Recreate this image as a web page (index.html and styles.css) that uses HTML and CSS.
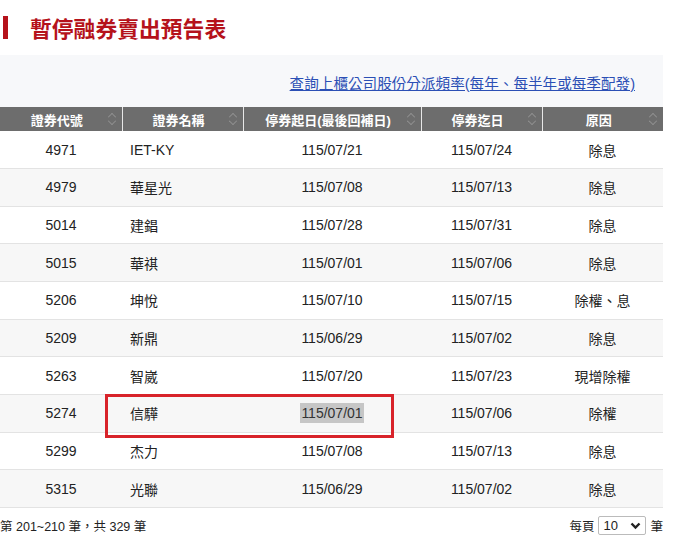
FILE: index.html
```html
<!DOCTYPE html>
<html lang="zh-Hant">
<head>
<meta charset="utf-8">
<link rel="stylesheet" href="styles.css">
</head>
<body>
<div class="page">
  <h1 class="title"><span class="bar"></span>暫停融券賣出預告表</h1>
  <div class="panel">
    <div class="linkrow"><a href="#" class="link">查詢上櫃公司股份分派頻率(每年、每半年或每季配發)</a></div>
    <table class="grid">
      <colgroup>
        <col class="c1"><col class="c2"><col class="c3"><col class="c4"><col class="c5">
      </colgroup>
      <thead>
        <tr>
          <th><span>證券代號</span><i class="sort"></i></th>
          <th><span>證券名稱</span><i class="sort"></i></th>
          <th><span>停券起日(最後回補日)</span><i class="sort"></i></th>
          <th><span>停券迄日</span><i class="sort"></i></th>
          <th><span>原因</span><i class="sort"></i></th>
        </tr>
      </thead>
      <tbody>
        <tr><td>4971</td><td class="name">IET-KY</td><td>115/07/21</td><td>115/07/24</td><td>除息</td></tr>
        <tr><td>4979</td><td class="name">華星光</td><td>115/07/08</td><td>115/07/13</td><td>除息</td></tr>
        <tr><td>5014</td><td class="name">建錩</td><td>115/07/28</td><td>115/07/31</td><td>除息</td></tr>
        <tr><td>5015</td><td class="name">華祺</td><td>115/07/01</td><td>115/07/06</td><td>除息</td></tr>
        <tr><td>5206</td><td class="name">坤悅</td><td>115/07/10</td><td>115/07/15</td><td>除權、息</td></tr>
        <tr><td>5209</td><td class="name">新鼎</td><td>115/06/29</td><td>115/07/02</td><td>除息</td></tr>
        <tr><td>5263</td><td class="name">智崴</td><td>115/07/20</td><td>115/07/23</td><td>現增除權</td></tr>
        <tr><td>5274</td><td class="name">信驊</td><td><mark class="hl">115/07/01</mark></td><td>115/07/06</td><td>除權</td></tr>
        <tr><td>5299</td><td class="name">杰力</td><td>115/07/08</td><td>115/07/13</td><td>除息</td></tr>
        <tr><td>5315</td><td class="name">光聯</td><td>115/06/29</td><td>115/07/02</td><td>除息</td></tr>
      </tbody>
    </table>
    <div class="redbox"></div>
  </div>
  <div class="footer">
    <span>第 201~210 筆，共 329 筆</span>
    <span class="perpage">每頁 <span class="select">10 <svg width="11" height="8" viewBox="0 0 11 8"><path d="M1.5 1.5 L5.5 5.5 L9.5 1.5" fill="none" stroke="#222" stroke-width="2.4"/></svg></span> 筆</span>
  </div>
</div>
</body>
</html>
```
FILE: styles.css
```css
* { box-sizing: border-box; }
html, body { margin: 0; padding: 0; background: #fff; }
body {
  font-family: "Liberation Sans", Arial, "Noto Sans CJK TC", sans-serif;
  color: #222;
  width: 690px;
  height: 536px;
  overflow: hidden;
}
.page { padding-top: 15px; }
.title {
  margin: 0;
  height: 25px;
  display: flex;
  align-items: center;
  font-size: 21.8px;
  font-weight: bold;
  color: #b5121b;
  font-family: "Noto Sans CJK TC", sans-serif;
  line-height: 25px;
}
.bar {
  display: inline-block;
  width: 5px;
  height: 23px;
  background: #b5121b;
  margin-left: 3px;
  margin-right: 22px;
}
.panel {
  position: relative;
  margin-top: 15px;
  width: 663px;
  background: #f7f8fa;
}
.linkrow {
  height: 52px;
  display: flex;
  align-items: center;
  justify-content: flex-end;
  padding-right: 28px;
  padding-top: 3px;
}
.link {
  color: #2b4fb5;
  font-size: 14.6px;
  text-decoration: underline;
  font-family: "Liberation Sans", "Noto Sans CJK TC", sans-serif;
}
.grid {
  width: 663px;
  border-collapse: collapse;
  table-layout: fixed;
  font-size: 14px;
}
.c1 { width: 122px; }
.c2 { width: 121px; }
.c3 { width: 178px; }
.c4 { width: 121px; }
.c5 { width: 121px; }
.grid th {
  background: #6d6d6d;
  color: #fff;
  font-size: 13px;
  font-weight: bold;
  height: 24px;
  padding: 0;
  border-left: 1px solid #e8e8e8;
  position: relative;
  font-family: "Liberation Sans", "Noto Sans CJK TC", sans-serif;
}
.grid th:first-child { border-left: none; }
.grid th span { position: relative; left: -4px; }
.sort {
  position: absolute;
  right: 6px;
  top: 5px;
  width: 8px;
  height: 14px;
}
.sort::before, .sort::after {
  content: "";
  position: absolute;
  left: 1px;
  width: 5px;
  height: 5px;
  border-left: 1px solid #9a9a9a;
  border-top: 1px solid #9a9a9a;
  border-top-left-radius: 1px;
}
.sort::before { top: 2px; transform: rotate(45deg); }
.sort::after { top: 6px; transform: rotate(-135deg); }
.grid td {
  height: 37.67px;
  padding: 0;
  text-align: center;
  border-bottom: 1px solid #e3e3e3;
  background: #fff;
  color: #222;
}
.grid tbody tr:nth-child(even) td { background: #f7f7f7; }
.grid td.name { text-align: left; padding-left: 8px; }
.hl { background: #c6c6c6; color: #333; padding: 2px 1px; }
.redbox {
  position: absolute;
  left: 105px;
  top: 339px;
  width: 289px;
  height: 44px;
  border: 3px solid #d8232a;
}
.footer {
  width: 663px;
  display: flex;
  justify-content: space-between;
  align-items: center;
  margin-top: 8px;
  font-size: 12.5px;
  color: #222;
}
.perpage { display: flex; align-items: center; gap: 4px; }
.select {
  display: inline-flex;
  align-items: center;
  justify-content: space-between;
  width: 48px;
  height: 19px;
  border: 1px solid #bbb;
  border-radius: 2px;
  padding: 0 4px;
  font-size: 13px;
  background: #fff;
}
```
